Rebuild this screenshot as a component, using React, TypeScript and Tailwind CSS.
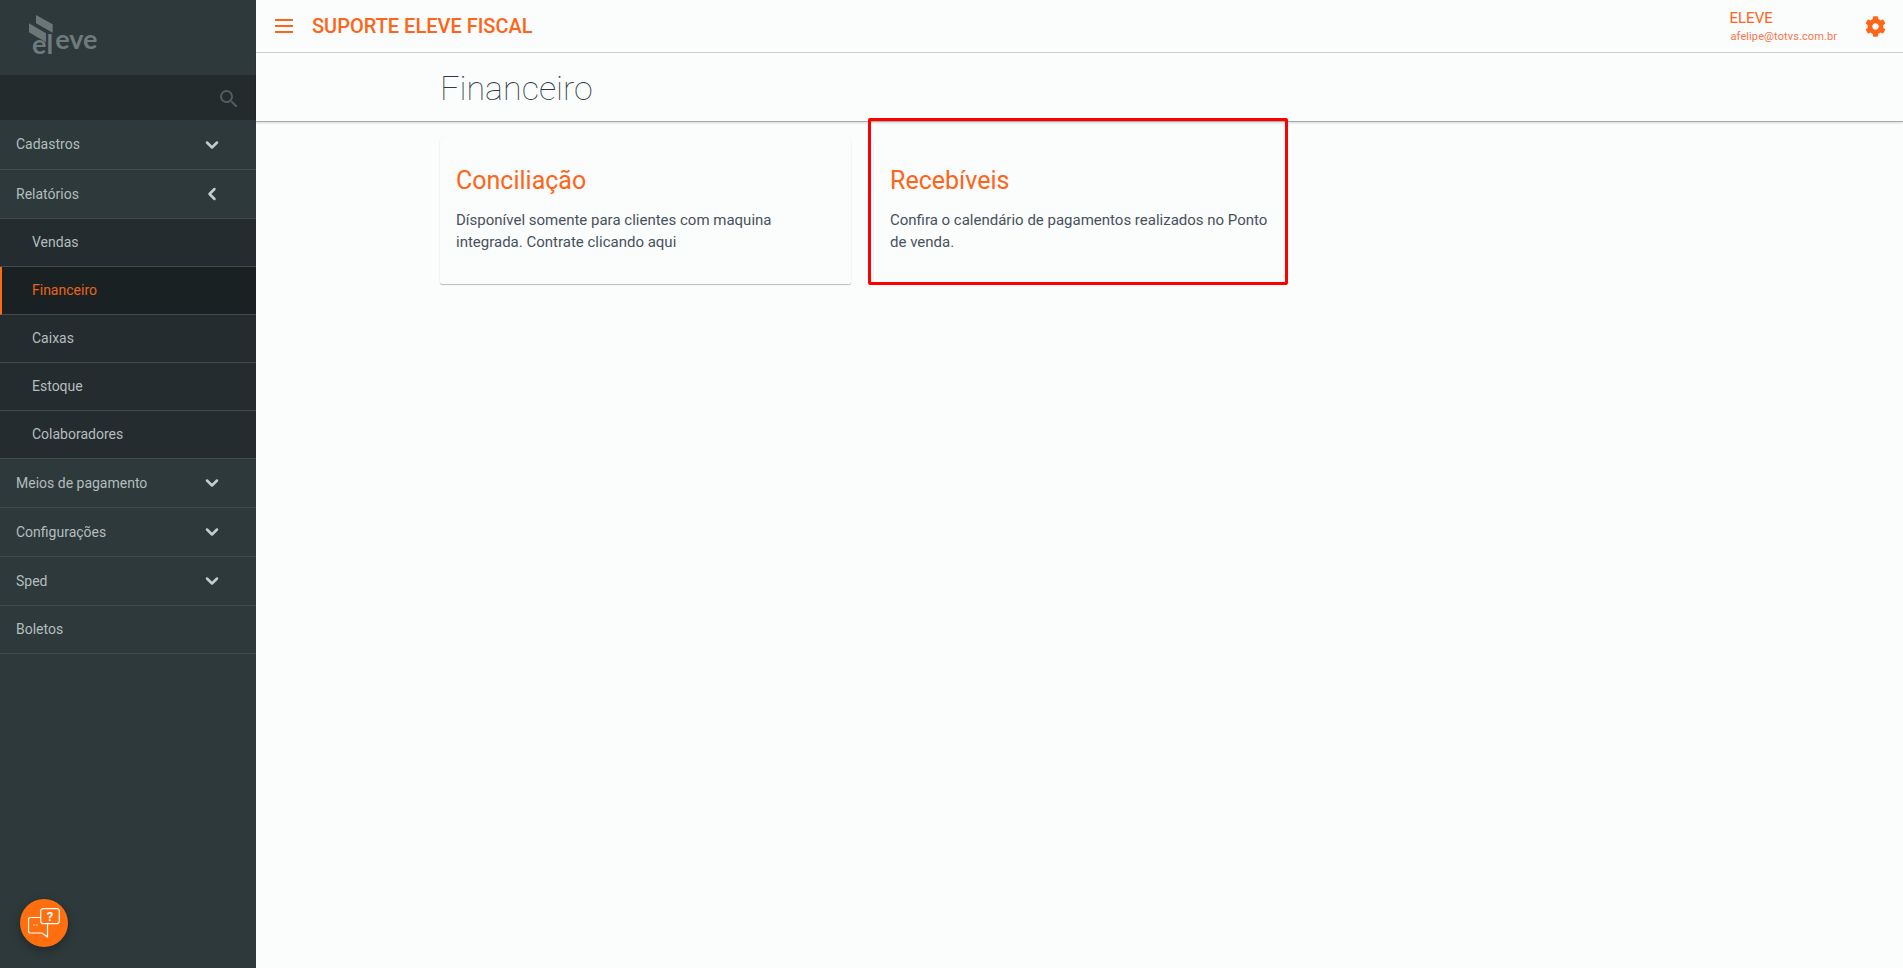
import React from "react";
import { ChevronDown, ChevronLeft } from "lucide-react";
import { FaCog } from "react-icons/fa";
import { MdSearch } from "react-icons/md";

type MenuItem = {
  label: string;
  height: string;
  icon?: "down" | "left";
  sub?: boolean;
  active?: boolean;
};

const menu: MenuItem[] = [
  { label: "Cadastros", height: "h-[50px]", icon: "down" },
  { label: "Relatórios", height: "h-[49px]", icon: "left" },
  { label: "Vendas", height: "h-[48px]", sub: true },
  { label: "Financeiro", height: "h-[48px]", sub: true, active: true },
  { label: "Caixas", height: "h-[48px]", sub: true },
  { label: "Estoque", height: "h-[48px]", sub: true },
  { label: "Colaboradores", height: "h-[48px]", sub: true },
  { label: "Meios de pagamento", height: "h-[49px]", icon: "down" },
  { label: "Configurações", height: "h-[49px]", icon: "down" },
  { label: "Sped", height: "h-[49px]", icon: "down" },
  { label: "Boletos", height: "h-[48px]" },
];

function Logo() {
  return (
    <div className="relative h-[75px] shrink-0">
      <svg className="absolute left-[29px] top-[15px]" width="24" height="28" viewBox="0 0 24 28" fill="#6b7678">
        <polygon points="7,0 23.7,9.3 23.7,17.7 7,8.3" />
        <polygon points="0,8.3 17,18.3 17,27.3 0,17.3" />
      </svg>
      <div className="absolute left-[32px] top-[30px] flex items-start font-['Lato',sans-serif] font-bold text-[#6f7a7c]">
        <span className="text-[27px] leading-[27px]">el</span>
        <span className="-mt-[5px] ml-[2px] text-[27px] leading-[27px]">eve</span>
      </div>
    </div>
  );
}

function SideRow({ item }: { item: MenuItem }) {
  return (
    <div
      className={`flex items-center justify-between border-b border-[#454a4b] text-[14px] ${item.height} ${
        item.active
          ? "border-l-2 border-l-[#ff6a13] bg-[#1a2122] pl-[30px] text-[#e8641c]"
          : item.sub
            ? "bg-[#242c2f] pl-[32px] text-[#b4bdbd]"
            : "bg-[#2d393b] pl-[16px] text-[#b4bdbd]"
      }`}
    >
      <span>{item.label}</span>
      {item.icon === "down" && <ChevronDown size={20} strokeWidth={3} className="mr-[34px] text-[#c4cccc]" />}
      {item.icon === "left" && <ChevronLeft size={20} strokeWidth={3} className="mr-[34px] text-[#c4cccc]" />}
    </div>
  );
}

function HelpButton() {
  return (
    <div className="absolute bottom-[21px] left-[20px] flex h-[48px] w-[48px] items-center justify-center rounded-full bg-[#ff6f10] shadow-[0_3px_10px_rgba(0,0,0,0.3)]">
      <svg width="32" height="30" viewBox="0 0 32 30" fill="none" stroke="#ffffff" strokeWidth="1.2">
        <path d="M12.5 9.5 H2.5 Q0.5 9.5 0.5 11.5 V23 Q0.5 25 2.5 25 H14 L19.5 29 V16" />
        <rect x="12.7" y="0.6" width="18.6" height="15" rx="2.5" />
        <path d="M5.3 17 H6.8 M8.2 17 H9.7" />
        <text x="22" y="13" textAnchor="middle" fontFamily="Roboto, sans-serif" fontSize="13" fontWeight="700" fill="#ffffff" stroke="none">
          ?
        </text>
      </svg>
    </div>
  );
}

function Card({ title, text }: { title: string; text: string }) {
  return (
    <div className="h-[146px] w-[411px] rounded-[2px] bg-[#fbfcfc] px-[16px] pt-[25px] shadow-[0_1px_1px_rgba(0,0,0,0.26),0_0_1px_rgba(0,0,0,0.08)]">
      <h2 className="text-[25px] leading-[36px] text-[#ff6418]">{title}</h2>
      <p className="mt-[10px] text-[15px] leading-[22px] text-[#47525c]">{text}</p>
    </div>
  );
}

export default function App() {
  return (
    <div className="flex h-[968px] overflow-hidden bg-[#fbfcfc] font-['Roboto',sans-serif]">
      <aside className="relative flex w-[256px] shrink-0 flex-col bg-[#2d393b]">
        <Logo />
        <div className="flex h-[45px] shrink-0 items-center justify-end bg-[#232b2d] pr-[15px] pt-[2px] text-[#4f5f60]">
          <MdSearch size={24} />
        </div>
        {menu.map((item) => (
          <SideRow key={item.label} item={item} />
        ))}
        <HelpButton />
      </aside>

      <main className="relative flex min-w-0 flex-1 flex-col">
        <header className="flex h-[53px] shrink-0 items-center border-b border-[#cfd1d1] pl-[19px] pr-[17px]">
          <div className="flex w-[18px] flex-col gap-[4px]">
            <span className="h-[2px] bg-[#ff6418]" />
            <span className="h-[2px] bg-[#ff6418]" />
            <span className="h-[2px] bg-[#ff6418]" />
          </div>
          <span className="ml-[19px] text-[20px] font-medium text-[#ff6418]">SUPORTE ELEVE FISCAL</span>
          <div className="ml-auto flex items-center">
            <div className="mr-[28px] flex flex-col">
              <span className="-ml-[1px] text-[15px] leading-[18px] text-[#ff6418]">ELEVE</span>
              <span className="mt-[3px] text-[11px] leading-[14px] tracking-[0.1px] text-[#f8764a]">afelipe@totvs.com.br</span>
            </div>
            <FaCog size={21} className="text-[#ff6418]" />
          </div>
        </header>

        <div className="flex h-[69px] shrink-0 items-center border-b border-[#a9abab] pl-[184px] pt-[3px] shadow-[0_1px_2px_rgba(0,0,0,0.15)]">
          <h1 className="text-[34px] font-thin text-[#2f3a44]">Financeiro</h1>
        </div>

        <div className="flex gap-[23px] pl-[184px] pt-[16px]">
          <Card
            title="Conciliação"
            text="Dísponível somente para clientes com maquina integrada. Contrate clicando aqui"
          />
          <Card
            title="Recebíveis"
            text="Confira o calendário de pagamentos realizados no Ponto de venda."
          />
        </div>

        {/* red annotation box on top of the second card */}
        <div className="absolute left-[612px] top-[118px] h-[167px] w-[420px] rounded-[2px] border-[3px] border-[#ff0000]" />
      </main>
    </div>
  );
}
